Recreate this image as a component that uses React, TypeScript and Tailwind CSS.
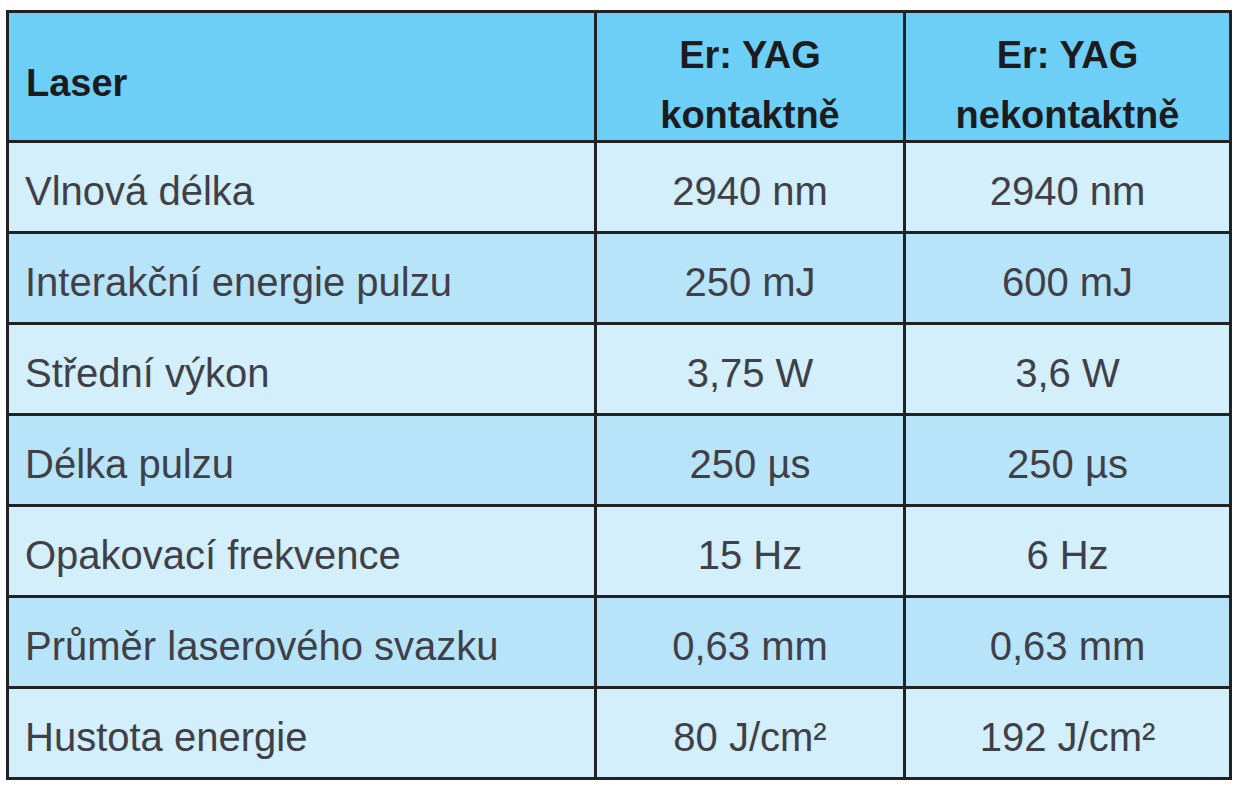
import React from "react";

const rows = [
  { label: "Vlnová délka", a: "2940 nm", b: "2940 nm" },
  { label: "Interakční energie pulzu", a: "250 mJ", b: "600 mJ" },
  { label: "Střední výkon", a: "3,75 W", b: "3,6 W" },
  { label: "Délka pulzu", a: "250 µs", b: "250 µs" },
  { label: "Opakovací frekvence", a: "15 Hz", b: "6 Hz" },
  { label: "Průměr laserového svazku", a: "0,63 mm", b: "0,63 mm" },
  { label: "Hustota energie", a: "80 J/cm²", b: "192 J/cm²" },
];

function App() {
  return (
    <div className="w-[1234px] h-[800px] bg-white pt-[10px] pl-[6px] font-['Liberation_Sans',Arial,sans-serif]">
      <div className="w-[1226px] border-[3px] border-[#222124]">
        {/* header */}
        <div className="grid grid-cols-[588px_309px_1fr] h-[130px] bg-[#6dcff6] border-b-[3px] border-[#222124] text-[38px] font-bold text-[#1c1c1e]">
          <div className="flex items-center pl-[17px] pt-[8px] border-r-[3px] border-[#222124]">
            Laser
          </div>
          <div className="flex flex-col items-center justify-center leading-[60px] pt-[12px] border-r-[3px] border-[#222124]">
            <span>Er: YAG</span>
            <span>kontaktně</span>
          </div>
          <div className="flex flex-col items-center justify-center leading-[60px] pt-[12px]">
            <span>Er: YAG</span>
            <span>nekontaktně</span>
          </div>
        </div>

        {/* body rows */}
        {rows.map((r, i) => (
          <div
            key={r.label}
            className={
              "grid grid-cols-[588px_309px_1fr] text-[40px] text-[#404048] " +
              (i % 2 === 0 ? "bg-[#d3effc] " : "bg-[#b8e4f9] ") +
              (i === rows.length - 1 ? "h-[88px]" : "h-[91px] border-b-[3px] border-[#222124]")
            }
          >
            <div className="flex items-center pl-[16px] pt-[8px] border-r-[3px] border-[#222124]">
              {r.label}
            </div>
            <div className="flex items-center justify-center pt-[8px] border-r-[3px] border-[#222124]">
              {r.a}
            </div>
            <div className="flex items-center justify-center pt-[8px]">{r.b}</div>
          </div>
        ))}
      </div>
    </div>
  );
}

export default App;
